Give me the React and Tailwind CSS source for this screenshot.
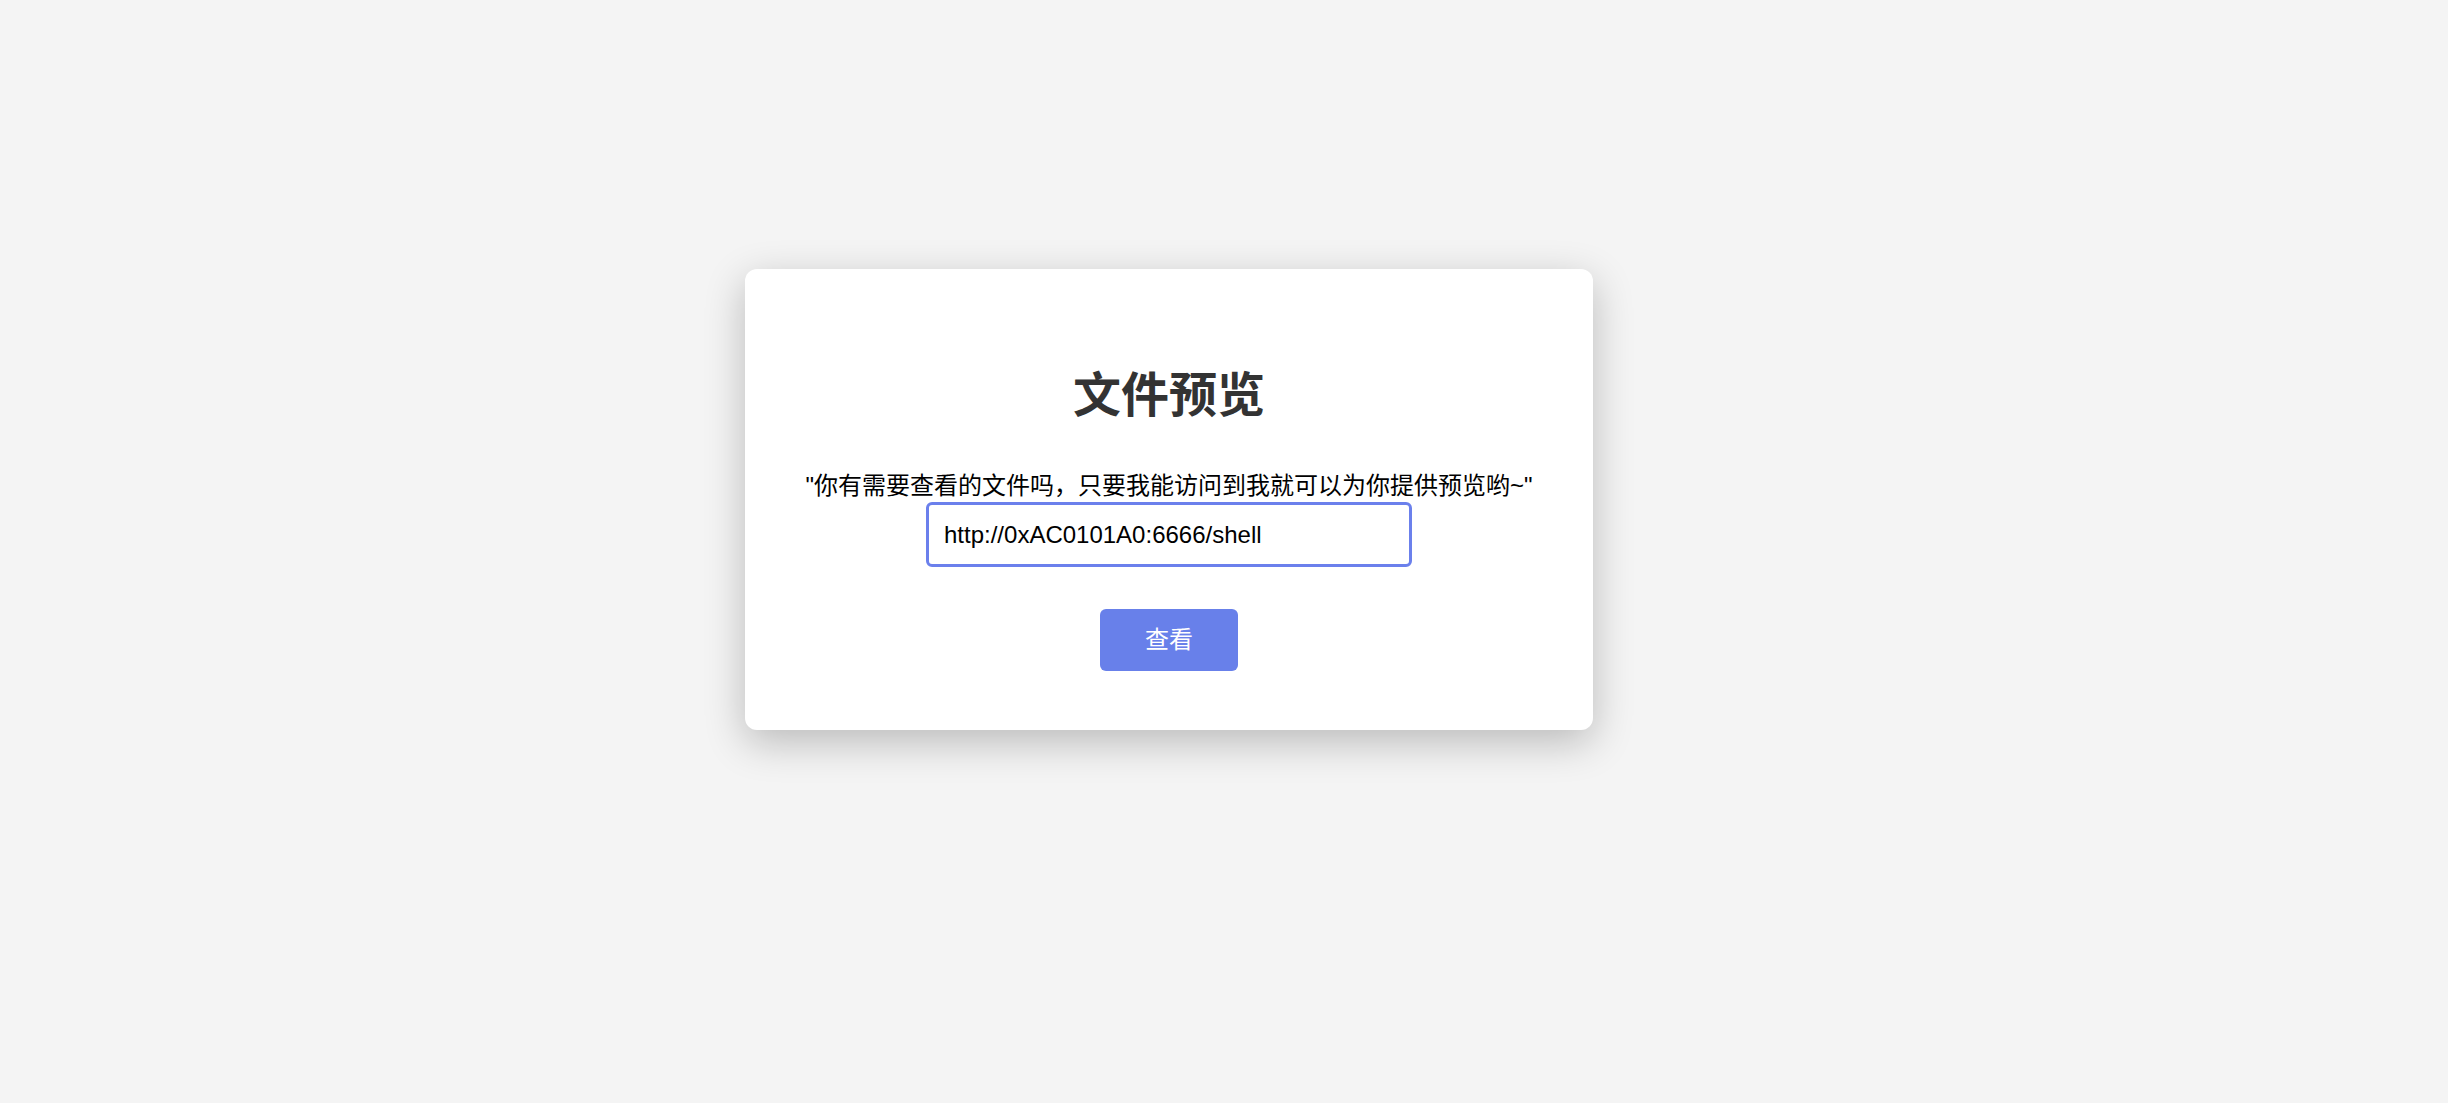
import React, { useState } from "react";

const FONT = {
  fontFamily: '"Liberation Sans", "Noto Sans CJK SC", sans-serif',
};

const FilePreview = () => {
  const [url, setUrl] = useState("http://0xAC0101A0:6666/shell");

  return (
    <div className="w-[848px] rounded-xl bg-white pt-[98px] pb-[59px] shadow-[0_12px_40px_rgba(0,0,0,0.24)] flex flex-col items-center">
      <h1 className="text-[48px] leading-[58px] font-bold text-[#333333]">文件预览</h1>

      <form
        className="mt-[45px] flex flex-col items-center"
        onSubmit={(e) => e.preventDefault()}
      >
        <label className="text-[24px] leading-[32px] text-black">
          "你有需要查看的文件吗，只要我能访问到我就可以为你提供预览哟~"
        </label>
        <input
          type="text"
          value={url}
          onChange={(e) => setUrl(e.target.value)}
          className="w-[486px] h-[65px] px-[15px] border-[3px] border-[#6b80ec] rounded-md text-[24px] text-black outline-none bg-white"
          style={FONT}
        />
        <button
          type="submit"
          className="mt-[42px] w-[138px] h-[62px] rounded-md bg-[#6880ea] text-white text-[24px]"
          style={FONT}
        >
          查看
        </button>
      </form>
    </div>
  );
};

export default function App() {
  return (
    <div
      className="min-h-screen bg-[#f4f4f4] flex items-start justify-start pl-[745px] pt-[269px]"
      style={FONT}
    >
      <FilePreview />
    </div>
  );
}
